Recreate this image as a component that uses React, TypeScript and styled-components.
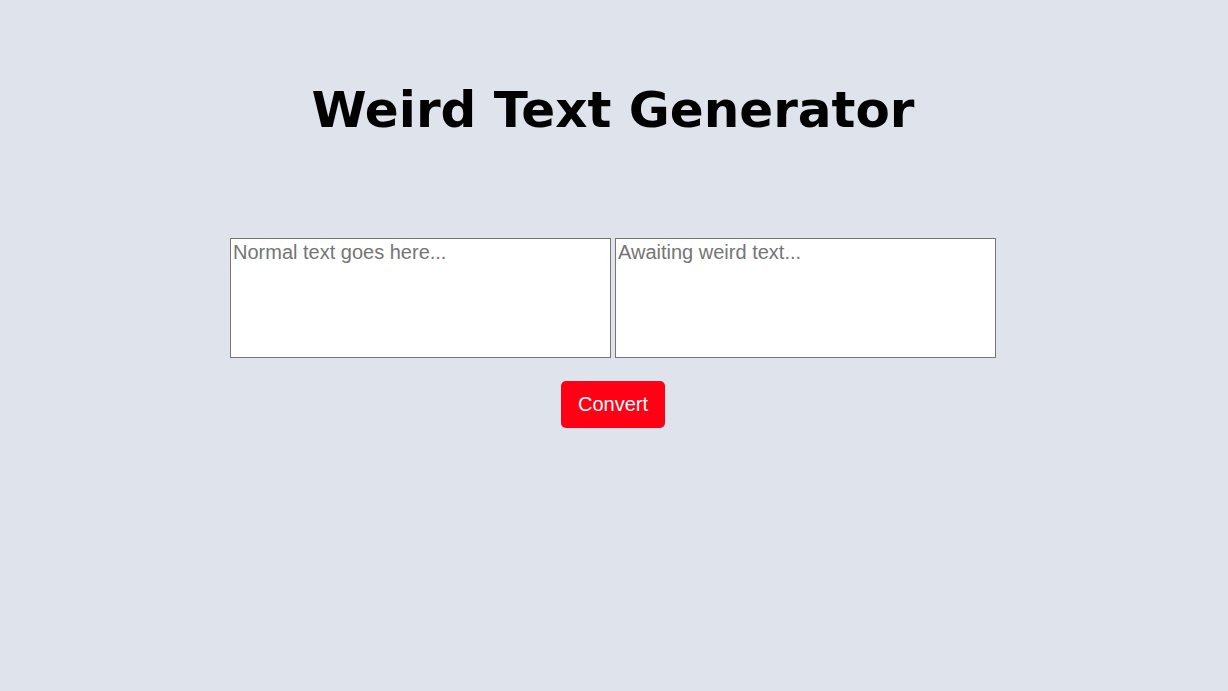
import styled, { createGlobalStyle } from "styled-components";

const GlobalStyle = createGlobalStyle`
  body {
    margin: 0;
    background-color: #dfe3ec;
    font-family: "Liberation Sans", Arial, sans-serif;
  }
`;

const Page = styled.main`
  display: flex;
  flex-direction: column;
  align-items: center;
  padding-top: 77px;
  padding-right: 2px;
`;

const Title = styled.h1`
  margin: 0;
  font-family: "DejaVu Sans", Verdana, sans-serif;
  font-size: 50px;
  font-weight: bold;
  color: #000;
  line-height: 66px;
`;

const Fields = styled.div`
  display: flex;
  gap: 4px;
  margin-top: 95px;
`;

const TextBox = styled.textarea`
  box-sizing: border-box;
  width: 381px;
  height: 120px;
  padding: 2px;
  border: 1px solid #767676;
  background: #fff;
  font-family: "Liberation Sans", Arial, sans-serif;
  font-size: 20px;
  resize: none;
  outline: none;

  &::placeholder {
    color: #757575;
  }
`;

const ConvertButton = styled.button`
  margin-top: 23px;
  width: 104px;
  height: 47px;
  border: none;
  border-radius: 5px;
  background-color: #ff0015;
  color: #fff;
  font-family: "Liberation Sans", Arial, sans-serif;
  font-size: 20px;
  cursor: pointer;
`;

const App = () => {
  return (
    <>
      <GlobalStyle />
      <Page>
        <Title>Weird Text Generator</Title>
        <Fields>
          <TextBox placeholder="Normal text goes here..." />
          <TextBox placeholder="Awaiting weird text..." readOnly />
        </Fields>
        <ConvertButton>Convert</ConvertButton>
      </Page>
    </>
  );
};

export default App;
